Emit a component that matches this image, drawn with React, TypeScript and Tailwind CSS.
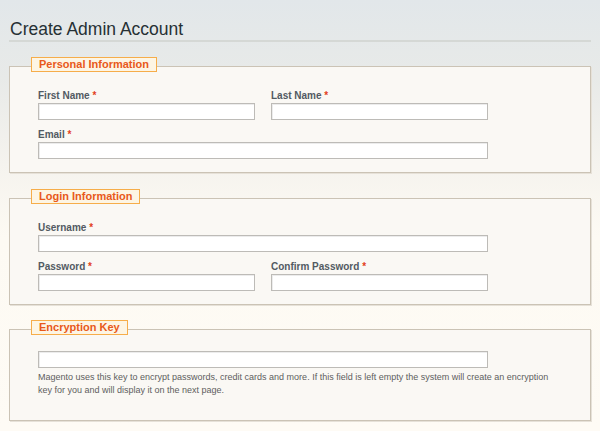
const Label = ({ text }: { text: string }) => (
  <label className="block text-[10px] leading-[14px] font-bold text-[#525a62]">
    {text} <span className="text-[#e2401c]">*</span>
  </label>
);

const Input = ({ wide = false }: { wide?: boolean }) => (
  <input
    type="text"
    className={
      wide
        ? 'block w-[450px] h-[17px] bg-white border border-[#bdbbb7] shadow-[inset_1px_1px_0_#ececec] outline-none'
        : 'block w-[217px] h-[17px] bg-white border border-[#bdbbb7] shadow-[inset_1px_1px_0_#ececec] outline-none'
    }
  />
);

const Legend = ({ title }: { title: string }) => (
  <span className="absolute -top-[10px] left-[21px] px-[7px] border border-[#f6ad4a] bg-[#fdf5e4] text-[11px] leading-[13px] font-bold text-[#e8591a]">
    {title}
  </span>
);

const App = () => {
  return (
    <div
      className="w-[600px] h-[431px] overflow-hidden px-[9px] bg-[linear-gradient(180deg,#e2e7ea_0%,#e8eae8_18%,#f5f3ee_38%,#fdfaf3_55%,#fefbf5_100%)]"
      style={{ fontFamily: '"Liberation Sans", Arial, sans-serif' }}
    >
      <h1 className="pt-[18px] pl-[1px] h-[42px] text-[17.5px] leading-[22px] font-normal text-[#263034] border-b-2 border-[#d5d8d5]">
        Create Admin Account
      </h1>

      {/* personal */}
      <div className="relative mt-[24px] border border-[#cbc3b5] bg-[#faf8f4] shadow-[1px_1px_0_#e6e1d8] pl-[28px] pt-[22px] pb-[13px]">
        <Legend title="Personal Information" />
        <div className="flex gap-[16px]">
          <div>
            <Label text="First Name" />
            <Input />
          </div>
          <div>
            <Label text="Last Name" />
            <Input />
          </div>
        </div>
        <div className="mt-[8px]">
          <Label text="Email" />
          <Input wide />
        </div>
      </div>

      {/* login */}
      <div className="relative mt-[25px] border border-[#cbc3b5] bg-[#faf8f4] shadow-[1px_1px_0_#e6e1d8] pl-[28px] pt-[22px] pb-[13px]">
        <Legend title="Login Information" />
        <div>
          <Label text="Username" />
          <Input wide />
        </div>
        <div className="flex gap-[16px] mt-[8px]">
          <div>
            <Label text="Password" />
            <Input />
          </div>
          <div>
            <Label text="Confirm Password" />
            <Input />
          </div>
        </div>
      </div>

      {/* encryption */}
      <div className="relative mt-[24px] border border-[#cbc3b5] bg-[#faf8f4] shadow-[1px_1px_0_#e6e1d8] pl-[28px] pt-[21px] pb-[24px]">
        <Legend title="Encryption Key" />
        <Input wide />
        <p className="mt-[3px] text-[9px] leading-[12.5px] text-[#5e5e5e] whitespace-nowrap">
          Magento uses this key to encrypt passwords, credit cards and more. If this field is left empty the system will create an encryption
          <br />
          key for you and will display it on the next page.
        </p>
      </div>
    </div>
  );
};

export default App;
